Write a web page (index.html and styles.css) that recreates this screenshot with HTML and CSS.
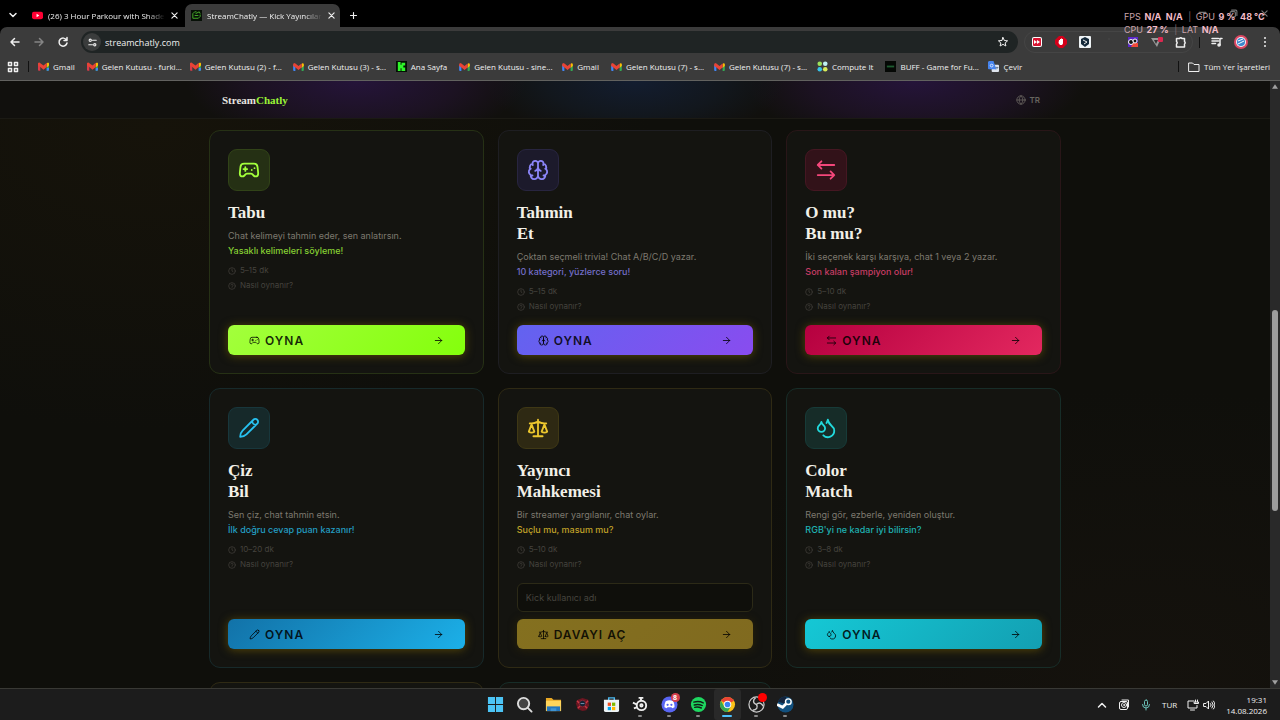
FILE: index.html
```
<!DOCTYPE html>
<html lang="tr">
<head>
  <meta charset="UTF-8">
  <meta name="viewport" content="width=device-width, initial-scale=1.0">
  <title>StreamChatly — Kick Yayıncıları</title>
  <link rel="stylesheet" href="styles.css">
</head>
<body>
  <svg class="sprite" aria-hidden="true">
    <symbol id="gamepad" viewBox="0 0 24 24"><path d="M6 11h4M8 9v4M15 12h.01M18 10h.01M17.32 5H6.68a4 4 0 0 0-3.978 3.59c-.006.052-.01.101-.017.152C2.604 9.416 2 14.456 2 16a3 3 0 0 0 3 3c1 0 1.5-.5 2-1l1.414-1.414A2 2 0 0 1 9.828 16h4.344a2 2 0 0 1 1.414.586L17 18c.5.5 1 1 2 1a3 3 0 0 0 3-3c0-1.545-.604-6.584-.685-7.258-.007-.05-.011-.1-.017-.151A4 4 0 0 0 17.32 5z"/></symbol>
    <symbol id="brain" viewBox="0 0 24 24"><path d="M12 5a3 3 0 1 0-5.997.125 4 4 0 0 0-2.526 5.77 4 4 0 0 0 .556 6.588A4 4 0 1 0 12 18ZM12 5a3 3 0 1 1 5.997.125 4 4 0 0 1 2.526 5.77 4 4 0 0 1-.556 6.588A4 4 0 1 1 12 18ZM15 13a4.5 4.5 0 0 1-3-4 4.5 4.5 0 0 1-3 4M17.599 6.5a3 3 0 0 0 .399-1.375M6.003 5.125A3 3 0 0 0 6.401 6.5M3.477 10.896a4 4 0 0 1 .585-.396M19.938 10.5a4 4 0 0 1 .585.396M6 18a4 4 0 0 1-1.967-.516M19.967 17.484A4 4 0 0 1 18 18"/></symbol>
    <symbol id="swap" viewBox="0 0 24 24"><path d="M7 2.500 3 6.500l4 4M3 6.500h18M17 21.500l4-4-4-4M21 17.500H3"/></symbol>
    <symbol id="pencil" viewBox="0 0 24 24"><path d="M21 3a2.900 2.900 0 0 0-4.200 0L5 14.800C3.200 16.600 2.400 19 2.400 21.600 5 21.600 7.400 20.800 9.200 19L21 7.200A2.900 2.900 0 0 0 21 3zM15.500 4.300c0 2.400 1.800 4.200 4.200 4.200"/></symbol>
    <symbol id="scale" viewBox="0 0 24 24"><path d="m16 16 3-8 3 8c-.87.65-1.92 1-3 1s-2.130-.35-3-1ZM2 16l3-8 3 8c-.87.65-1.920 1-3 1s-2.130-.35-3-1ZM7 21h10M12 3v18M3 7h2c2 0 5-1 7-2 2 1 5 2 7 2h2"/></symbol>
    <symbol id="droplets" viewBox="0 0 24 24"><path d="M7 16.300c2.200 0 4-1.830 4-4.050 0-1.160-.57-2.260-1.710-3.190S7.290 6.750 7 5.300c-.29 1.450-1.140 2.840-2.290 3.760S3 11.100 3 12.250c0 2.220 1.800 4.050 4 4.050zM12.560 6.600A10.970 10.970 0 0 0 14 3.020c.5 2.500 2 4.900 4 6.500s3 3.500 3 5.500a6.980 6.980 0 0 1-11.910 4.970"/></symbol>
    <symbol id="clock" viewBox="0 0 24 24"><circle cx="12" cy="12" r="10"/><path d="M12 6v6l3 2"/></symbol>
    <symbol id="help" viewBox="0 0 24 24"><circle cx="12" cy="12" r="10"/><path d="M9 9a3 3 0 0 1 6 1c0 2-3 2-3 4M12 17h.01"/></symbol>
    <symbol id="arrow" viewBox="0 0 24 24"><path d="M5 12h14M12 5l7 7-7 7"/></symbol>
    <symbol id="globe" viewBox="0 0 24 24"><circle cx="12" cy="12" r="10"/><path d="M2 12h20M12 2c-6 6-6 14 0 20M12 2c6 6 6 14 0 20"/></symbol>
    <symbol id="close" viewBox="0 0 24 24"><path d="M5 5l14 14M19 5 5 19"/></symbol>
    <symbol id="plus" viewBox="0 0 24 24"><path d="M12 4v16M4 12h16"/></symbol>
    <symbol id="down" viewBox="0 0 24 24"><path d="m6 9 6 6 6-6"/></symbol>
    <symbol id="up" viewBox="0 0 24 24"><path d="m5 16 7-7 7 7"/></symbol>
    <symbol id="gmail" viewBox="0 0 24 18">
      <path d="M0 2v14a2 2 0 0 0 2 2h3V7z" fill="#d93b4a"/>
      <path d="M24 2v14a2 2 0 0 1-2 2h-3V7z" fill="#34a853"/>
      <path d="M19 12v6h3a2 2 0 0 0 2-2v-4z" fill="#4285f4"/>
      <path d="M19 2l3-2 2 2v5l-5 4z" fill="#fbbc04"/>
      <path d="M0 2 2 0h1l9 7 7-6v9l-7 6-7-6L0 7z" fill="#ea4335"/>
    </symbol>
    <symbol id="gmail-blue" viewBox="0 0 24 18">
      <path d="M0 4v12a2 2 0 0 0 2 2h3V7z" fill="#4285f4"/>
      <path d="M24 4v12a2 2 0 0 1-2 2h-3V7z" fill="#34a853"/>
      <path d="M19 2l3-2 2 2v5l-5 4z" fill="#fbbc04"/>
      <path d="M0 2 2 0l3 1 7 6 7-6v9l-7 6-7-6L0 7z" fill="#ea4335"/>
    </symbol>
  </svg>

  <header class="browser">
    <div class="tabs">
      <button class="tool" aria-label="Sekme ara"><svg class="icon bold"><use href="#down"/></svg></button>
      <div class="tab">
        <svg class="favicon" viewBox="0 0 12 12"><rect y="2" width="12" height="8" rx="2" fill="#f03"/><path d="M5 4v4l3-2z" fill="#fff"/></svg>
        <span class="tab-title">(26) 3 Hour Parkour with Shade</span>
        <button class="tool" aria-label="Kapat"><svg class="icon small"><use href="#close"/></svg></button>
      </div>
      <div class="tab active">
        <svg class="favicon" viewBox="0 0 12 12"><rect width="12" height="12" fill="#071007"/><g fill="none" stroke="#49b52c"><path d="M6 2H4L2 4v5h6l2-2V5M5 4l4-2 1 2M4 6h4"/></g></svg>
        <span class="tab-title">StreamChatly — Kick Yayıncılar</span>
        <button class="tool" aria-label="Kapat"><svg class="icon small"><use href="#close"/></svg></button>
      </div>
      <button class="tool new-tab" aria-label="Yeni sekme"><svg class="icon small"><use href="#plus"/></svg></button>
      <div class="window-buttons">
        <svg class="icon small" viewBox="0 0 24 24"><path d="M3 9h18"/></svg>
        <svg class="icon small" viewBox="0 0 24 24"><rect x="3" y="7" width="14" height="14" rx="3"/><path d="M7 3h11a3 3 0 0 1 3 3v11"/></svg>
        <svg class="icon small"><use href="#close"/></svg>
      </div>
    </div>

    <div class="toolbar">
      <div class="nav">
        <button class="tool" aria-label="Geri"><svg class="icon bold" viewBox="0 0 24 24"><path d="M20 12H4M11 5l-7 7 7 7"/></svg></button>
        <button class="tool dim" aria-label="İleri"><svg class="icon bold" viewBox="0 0 24 24"><path d="M4 12h16M13 5l7 7-7 7"/></svg></button>
        <button class="tool" aria-label="Yenile"><svg class="icon bold" viewBox="0 0 24 24"><path d="M19 8a8 8 0 1 0 1 6M20 3v6h-6"/></svg></button>
      </div>
      <div class="address">
        <span class="site-info"><svg class="icon small" viewBox="0 0 24 24"><circle cx="6" cy="6" r="3"/><path d="M12 6h10M2 18h10"/><circle cx="18" cy="18" r="3"/></svg></span>
        <input type="text" class="url" value="streamchatly.com" aria-label="Adres">
        <svg class="icon star" viewBox="0 0 24 24"><path d="m12 3 2.700 6 6.500.6-4.900 4.300L17.800 20 12 16.700 6.200 20l1.500-6.100-4.900-4.300 6.500-.6z"/></svg>
      </div>
      <div class="extensions">
        <svg class="ext" viewBox="0 0 12 12"><rect x="1" y="1" width="10" height="10" rx="2" fill="#fff"/><rect x="2" y="2" width="8" height="8" rx="1" fill="#d71330"/><path d="M3 4v4l3-2zM6 4v4l3-2z" fill="#fff"/></svg>
        <svg class="ext" viewBox="0 0 12 12"><path d="M4 0h4l4 4v4l-4 4H4L0 8V4z" fill="#d4001a"/><path d="M4 4h1V3h1v-.5h1V3h1v4.500L7 9H5L3.500 7z" fill="#fff"/></svg>
        <svg class="ext" viewBox="0 0 12 12"><rect width="12" height="12" rx="1" fill="#eef3f6"/><path d="m6 1 4 2v5l-4 3-4-3V3z" fill="#14293a"/><path d="M4 4l4 2-3 2" fill="none" stroke="#eee"/></svg>
        <svg class="ext" viewBox="0 0 12 12"><circle cx="6" cy="3" r="1" fill="#444"/></svg>
        <svg class="ext" viewBox="0 0 12 12"><path d="M1 1h10v5L7 11H1z" fill="#5a28c8"/><path d="M6 7h5v4H4z" fill="#f04838"/><circle cx="4" cy="6" r="2.500" fill="#111" stroke="#fff"/><circle cx="8" cy="5" r="2" fill="#111" stroke="#fff"/></svg>
        <svg class="ext" viewBox="0 0 12 12"><path d="M0 2h10L6 11z" fill="#999"/><path d="M3 4h4L5 8z" fill="#333"/><rect x="7" y="1" width="5" height="5" rx="1" fill="#dc2850"/></svg>
        <svg class="icon bold" viewBox="0 0 24 24"><path d="M3 5h6a3 3 0 0 1 5 0h5v6a3 3 0 0 1 0 5v6H3v-6a3 3 0 0 0 0-5z"/></svg>
      </div>
      <span class="divider"></span>
      <svg class="icon bold" viewBox="0 0 24 24"><path d="M2 5h13M2 10h13M2 15h7M18 18V5h4"/><circle cx="16" cy="18" r="2"/></svg>
      <svg class="avatar" viewBox="0 0 14 14"><circle cx="7" cy="7" r="7" fill="#dc4864"/><circle cx="7" cy="7" r="5" fill="#f4f4f8"/><circle cx="7" cy="7" r="4" fill="#3c86cc"/><path d="M4 6l5-2M4 9l6-3" stroke="#fff"/></svg>
      <svg class="icon more" viewBox="0 0 24 24"><path d="M12 4v.1M12 12v.1M12 20v.1"/></svg>
    </div>

    <nav class="bookmarks">
      <svg class="icon apps" viewBox="0 0 24 24"><path d="M3 3h6v6H3zM15 3h6v6h-6zM3 15h6v6H3zM15 15h6v6h-6z"/></svg>
      <span class="divider"></span>
      <a class="bookmark" href="#"><svg class="fav"><use href="#gmail"/></svg>Gmail</a>
      <a class="bookmark long" href="#"><svg class="fav"><use href="#gmail"/></svg>Gelen Kutusu - furki...</a>
      <a class="bookmark long" href="#"><svg class="fav"><use href="#gmail"/></svg>Gelen Kutusu (2) - f...</a>
      <a class="bookmark long" href="#"><svg class="fav mini"><use href="#gmail-blue"/></svg>Gelen Kutusu (3) - s...</a>
      <a class="bookmark" href="#"><svg class="fav" viewBox="0 0 12 12"><rect width="12" height="12" fill="#041004"/><path d="M2 1h3v3h1V2h4v3H8v2h2v4H6V8H5v3H2z" fill="#2ff52a"/></svg>Ana Sayfa</a>
      <a class="bookmark long" href="#"><svg class="fav mini"><use href="#gmail-blue"/></svg>Gelen Kutusu - sine...</a>
      <a class="bookmark" href="#"><svg class="fav mini"><use href="#gmail-blue"/></svg>Gmail</a>
      <a class="bookmark long" href="#"><svg class="fav mini"><use href="#gmail-blue"/></svg>Gelen Kutusu (7) - s...</a>
      <a class="bookmark long" href="#"><svg class="fav mini"><use href="#gmail-blue"/></svg>Gelen Kutusu (7) - s...</a>
      <a class="bookmark" href="#"><svg class="fav" viewBox="0 0 12 12"><circle cx="3" cy="3" r="2.500" fill="#9be15a"/><circle cx="9" cy="3" r="2.500" fill="#bff0f4"/><circle cx="3" cy="9" r="2.500" fill="#35c3e8"/><circle cx="9" cy="9" r="2.500" fill="#d8ec5a"/></svg>Compute It</a>
      <a class="bookmark long" href="#"><svg class="fav" viewBox="0 0 12 12"><rect width="12" height="12" fill="#050805"/><path d="M2 6h8" stroke="#1d5c30" stroke-width="2"/></svg>BUFF - Game for Fu...</a>
      <a class="bookmark" href="#"><svg class="fav" viewBox="0 0 12 12"><rect x="4" y="4" width="8" height="8" rx="1" fill="#dfe5ee"/><path d="M1 0h5l3 9H1a1 1 0 0 1-1-1V1z" fill="#4684ee"/><circle cx="4" cy="5" r="1.500" fill="none" stroke="#dce8ff"/><path d="M8 7h3M9 9l2-2" stroke="#5a6e8c"/></svg>Çevir</a>
      <span class="spacer"></span>
      <span class="divider"></span>
      <a class="bookmark all" href="#"><svg class="icon" viewBox="0 0 24 24"><path d="M2 4h7l3 3h10v14H2z"/></svg>Tüm Yer İşaretleri</a>
    </nav>
  </header>

  <div class="viewport">
    <div class="page">
      <header class="site-header">
        <div class="container header-inner">
          <a class="logo" href="#">Stream<span>Chatly</span></a>
          <button class="lang"><svg class="icon"><use href="#globe"/></svg>TR</button>
        </div>
      </header>

      <main class="container games">
        <article class="card green">
          <div class="card-icon"><svg class="icon"><use href="#gamepad"/></svg></div>
          <h2>Tabu</h2>
          <p class="desc">Chat kelimeyi tahmin eder, sen anlatırsın.<br><strong>Yasaklı kelimeleri söyleme!</strong></p>
          <div class="meta">
            <span><svg class="icon"><use href="#clock"/></svg>5–15 dk</span>
            <button><svg class="icon"><use href="#help"/></svg>Nasıl oynanır?</button>
          </div>
          <button class="play"><svg class="icon"><use href="#gamepad"/></svg>OYNA<svg class="icon go"><use href="#arrow"/></svg></button>
        </article>

        <article class="card indigo">
          <div class="card-icon"><svg class="icon"><use href="#brain"/></svg></div>
          <h2>Tahmin<br>Et</h2>
          <p class="desc">Çoktan seçmeli trivia! Chat A/B/C/D yazar.<br><strong>10 kategori, yüzlerce soru!</strong></p>
          <div class="meta">
            <span><svg class="icon"><use href="#clock"/></svg>5–15 dk</span>
            <button><svg class="icon"><use href="#help"/></svg>Nasıl oynanır?</button>
          </div>
          <button class="play"><svg class="icon"><use href="#brain"/></svg>OYNA<svg class="icon go"><use href="#arrow"/></svg></button>
        </article>

        <article class="card rose">
          <div class="card-icon"><svg class="icon"><use href="#swap"/></svg></div>
          <h2>O mu?<br>Bu mu?</h2>
          <p class="desc">İki seçenek karşı karşıya, chat 1 veya 2 yazar.<br><strong>Son kalan şampiyon olur!</strong></p>
          <div class="meta">
            <span><svg class="icon"><use href="#clock"/></svg>5–10 dk</span>
            <button><svg class="icon"><use href="#help"/></svg>Nasıl oynanır?</button>
          </div>
          <button class="play"><svg class="icon"><use href="#swap"/></svg>OYNA<svg class="icon go"><use href="#arrow"/></svg></button>
        </article>

        <article class="card sky">
          <div class="card-icon"><svg class="icon"><use href="#pencil"/></svg></div>
          <h2>Çiz<br>Bil</h2>
          <p class="desc">Sen çiz, chat tahmin etsin.<br><strong>İlk doğru cevap puan kazanır!</strong></p>
          <div class="meta">
            <span><svg class="icon"><use href="#clock"/></svg>10–20 dk</span>
            <button><svg class="icon"><use href="#help"/></svg>Nasıl oynanır?</button>
          </div>
          <button class="play"><svg class="icon"><use href="#pencil"/></svg>OYNA<svg class="icon go"><use href="#arrow"/></svg></button>
        </article>

        <article class="card gold">
          <div class="card-icon"><svg class="icon"><use href="#scale"/></svg></div>
          <h2>Yayıncı<br>Mahkemesi</h2>
          <p class="desc">Bir streamer yargılanır, chat oylar.<br><strong>Suçlu mu, masum mu?</strong></p>
          <div class="meta">
            <span><svg class="icon"><use href="#clock"/></svg>5–10 dk</span>
            <button><svg class="icon"><use href="#help"/></svg>Nasıl oynanır?</button>
          </div>
          <input type="text" class="username" placeholder="Kick kullanıcı adı" aria-label="Kick kullanıcı adı">
          <button class="play"><svg class="icon"><use href="#scale"/></svg>DAVAYI AÇ<svg class="icon go"><use href="#arrow"/></svg></button>
        </article>

        <article class="card teal">
          <div class="card-icon"><svg class="icon"><use href="#droplets"/></svg></div>
          <h2>Color<br>Match</h2>
          <p class="desc">Rengi gör, ezberle, yeniden oluştur.<br><strong>RGB'yi ne kadar iyi bilirsin?</strong></p>
          <div class="meta">
            <span><svg class="icon"><use href="#clock"/></svg>3–8 dk</span>
            <button><svg class="icon"><use href="#help"/></svg>Nasıl oynanır?</button>
          </div>
          <button class="play"><svg class="icon"><use href="#droplets"/></svg>OYNA<svg class="icon go"><use href="#arrow"/></svg></button>
        </article>

        <article class="card gold"></article>
        <article class="card teal"></article>
      </main>
    </div>

    <div class="scrollbar">
      <svg viewBox="0 0 8 6"><path d="M4 0l4 6H0z"/></svg>
      <div class="track"><div class="thumb"></div></div>
      <svg viewBox="0 0 8 6"><path d="M0 0h8L4 6z"/></svg>
    </div>
  </div>

  <footer class="taskbar">
    <div class="apps-row">
      <span class="app"><svg viewBox="0 0 18 18"><path d="M1 1h7.500v7.500H1zM9.500 1H17v7.500H9.500zM1 9.500h7.500V17H1zM9.500 9.500H17V17H9.500z" fill="#4cc4f5"/></svg></span>
      <span class="app"><svg viewBox="0 0 18 18" fill="none" stroke="#ddd" stroke-width="2"><circle cx="8" cy="8" r="6" fill="#444"/><path d="m12.500 12.500 4 4" stroke-linecap="round"/></svg></span>
      <span class="app"><svg viewBox="0 0 18 18"><path d="M1 2h6l2 2h8v12H1z" fill="#e9a825"/><path d="M1 5h16v11H1z" fill="#ffd45a"/><path d="M2 11h14v5H2z" fill="#2476bd"/><path d="M6 13h6v3H6z" fill="#3f93d2"/></svg></span>
      <span class="app"><svg viewBox="0 0 18 18"><path d="m9 2 6 2 1 6-3 5-4 1-5-2-2-6 2-4z" fill="#6b1621"/><path d="m3 5 3 3M15 5l-3 3M4 13l3-3M14 13l-3-3" stroke="#c93644" stroke-width="1.500"/><circle cx="9" cy="8" r="3.500" fill="#142235" stroke="#8b2632"/><path d="M7 8h4" stroke="#7796b0"/></svg></span>
      <span class="app"><svg viewBox="0 0 18 18"><path d="M6 5V2h6v3" fill="none" stroke="#49b8f0" stroke-width="1.500"/><path d="M1 4h16v11a2 2 0 0 1-2 2H3a2 2 0 0 1-2-2z" fill="#eef4f7"/><path d="M5 7h3.500v3.500H5z" fill="#f25022"/><path d="M9.500 7H13v3.500H9.500z" fill="#7fba00"/><path d="M5 11.500h3.500V15H5z" fill="#00a4ef"/><path d="M9.500 11.500H13V15H9.500z" fill="#ffb900"/></svg></span>
      <span class="app open"><svg viewBox="0 0 18 18" fill="none" stroke="#eee" stroke-width="2"><circle cx="10" cy="10" r="5"/><circle cx="10" cy="10" r="1.200"/><path d="M5 9 1 7M7 2h5M9.500 2v3M5 12l-3 1"/></svg></span>
      <span class="app open"><svg viewBox="0 0 18 18"><circle cx="9" cy="9" r="8.500" fill="#5865f2"/><path d="M5 5.500c3-1.300 5-1.300 8 0 1 2 1.500 4 1.300 6.500L12 13l-1-1H7l-1 1-2.300-1C3.500 9.500 4 7.500 5 5.500z" fill="#fff"/><circle cx="7" cy="9.300" r="1.200" fill="#5865f2"/><circle cx="11" cy="9.300" r="1.200" fill="#5865f2"/></svg><b class="badge">8</b></span>
      <span class="app open"><svg viewBox="0 0 18 18"><circle cx="9" cy="9" r="8" fill="#1ed760"/><path d="M4 6.500c4-1.200 7-.8 10 .8M4.500 9.500c3-1 6-.6 8.500.6M5 12c2.500-.7 4.500-.4 7 .7" fill="none" stroke="#102016" stroke-width="1.500" stroke-linecap="round"/></svg></span>
      <span class="app open current"><svg viewBox="0 0 18 18"><circle cx="9" cy="9" r="8" fill="#fbc117"/><path d="M9 9 2.100 5A8 8 0 0 1 15.900 5z" fill="#ea4335"/><path d="M2.100 5A8 8 0 0 0 9 17l3.500-6H5.500z" fill="#34a853"/><circle cx="9" cy="9" r="4" fill="#fff"/><circle cx="9" cy="9" r="3" fill="#3b82f0"/></svg></span>
      <span class="app open"><svg viewBox="0 0 18 18" fill="none" stroke="#ccc"><circle cx="9" cy="9" r="8" fill="#1c1c1c" stroke-width="1.300"/><path d="M9 9C5 8 5 4 8 2M9 9c2 3 0 6-4 6M9 9c3-3 6-1 7 2" stroke-width="1.500"/></svg><b class="badge dot"></b></span>
      <span class="app open"><svg viewBox="0 0 18 18"><circle cx="9" cy="9" r="8.500" fill="#12507e"/><path d="M1 6a8.500 8.500 0 0 1 9-5l-2 7z" fill="#13233c"/><path d="m0 9 6 3 5-5" stroke="#fff" stroke-width="3" fill="none"/><circle cx="12" cy="6" r="3" fill="#12507e" stroke="#fff" stroke-width="1.500"/></svg></span>
    </div>
    <div class="tray">
      <svg class="icon bold" viewBox="0 0 24 24"><use href="#up"/></svg>
      <svg class="icon" viewBox="0 0 24 24"><rect x="3" y="5" width="16" height="16" rx="3"/><circle cx="12" cy="12" r="5"/><circle cx="12" cy="12" r="1"/><path d="M8 2h13v14"/></svg>
      <svg class="icon mic" viewBox="0 0 24 24"><rect x="9" y="2" width="6" height="12" rx="3"/><path d="M5 11a7 7 0 0 0 14 0M12 18v4"/></svg>
      <span class="keyboard">TUR</span>
      <svg class="icon" viewBox="0 0 24 24"><path d="M14 4H2v14h18v-5M7 22h8M17 2v4M21 2v4M15 6h8v3h-8z"/></svg>
      <svg class="icon" viewBox="0 0 24 24"><path d="M2 9h4l5-5v16l-5-5H2zM15 9a4 4 0 0 1 0 6M18 6a9 9 0 0 1 0 12M21 4a12 12 0 0 1 0 16"/></svg>
      <time class="clock">19:31<br>14.08.2026</time>
    </div>
  </footer>

  <!-- performance overlay -->
  <div class="overlay">
    <div>FPS <b>N/A</b> <b>N/A</b> <i>|</i> GPU <b>9 %</b> <b>48 °C</b></div>
    <div>CPU <b>27 %</b> <i>|</i> LAT <b>N/A</b></div>
  </div>
</body>
</html>
```
FILE: styles.css
```
* {
  box-sizing: border-box;
  margin: 0;
  padding: 0;
}

body {
  display: flex;
  flex-direction: column;
  height: 100vh;
  overflow: hidden;
  background: #000;
  color: #f0f0f0;
  font-family: "Open Sans", "Noto Sans", sans-serif;
  font-size: 8px;
}

button, input {
  font: inherit;
  color: inherit;
  background: none;
  border: none;
}

button {
  cursor: pointer;
}

a {
  color: inherit;
  text-decoration: none;
}

.sprite {
  display: none;
}

.icon {
  width: 12px;
  height: 12px;
  flex: none;
  fill: none;
  stroke: currentColor;
  stroke-width: 2;
  stroke-linecap: round;
  stroke-linejoin: round;
}

.icon.bold {
  stroke-width: 3;
}

.icon.small {
  width: 9px;
  height: 9px;
  stroke-width: 3;
}

/* browser */
.browser {
  flex: none;
  border-bottom: 1px solid #62625f;
}

.tabs {
  display: flex;
  align-items: flex-end;
  height: 27px;
  padding-left: 7px;
}

.tool {
  display: flex;
  align-items: center;
  justify-content: center;
  height: 24px;
}

.tool.dim {
  color: #858585;
}

.tab {
  display: flex;
  align-items: center;
  gap: 5px;
  width: 155px;
  height: 23px;
  padding: 0 6px;
}

.tabs > .tool + .tab {
  margin-left: 7px;
}

.tab.active {
  margin-left: 4px;
  background: #3b3b3b;
  border-radius: 7px 7px 0 0;
}

.favicon {
  width: 11px;
  height: 11px;
  flex: none;
}

.tab-title {
  flex: 1;
  white-space: nowrap;
  -webkit-mask-image: linear-gradient(90deg, #000 85%, transparent);
  mask-image: linear-gradient(90deg, #000 85%, transparent);
}

.new-tab {
  margin-left: 9px;
}

.window-buttons {
  display: flex;
  gap: 22px;
  margin-left: auto;
  padding: 0 11px 9px 0;
  color: #777;
}

.toolbar {
  display: flex;
  align-items: center;
  height: 30px;
  padding: 0 9px;
  background: #3b3b3b;
  border-radius: 7px 7px 0 0;
}

.toolbar > .icon, .avatar {
  margin-left: 11px;
}

.nav {
  display: flex;
  gap: 12px;
  width: 72px;
}

.address {
  display: flex;
  align-items: center;
  flex: 1;
  height: 22px;
  padding: 0 9px 0 2px;
  background: #1f2424;
  border-radius: 11px;
}

.site-info {
  display: flex;
  align-items: center;
  justify-content: center;
  width: 18px;
  height: 18px;
  border-radius: 50%;
  background: #3a3c3c;
}

.url {
  flex: 1;
  margin-left: 4px;
  font-size: 9px;
  outline: none;
}

.extensions {
  display: flex;
  align-items: center;
  gap: 12px;
  height: 22px;
  margin-left: 6px;
  padding: 0 5px 0 6px;
  border: 1px solid #454545;
  border-radius: 11px;
}

.ext {
  width: 12px;
  height: 12px;
}

.divider {
  width: 1px;
  height: 11px;
  margin-left: 6px;
  background: #111;
}

.avatar {
  width: 14px;
  height: 14px;
}

.more {
  stroke-width: 4;
}

.bookmarks {
  display: flex;
  align-items: center;
  height: 23px;
  padding: 0 10px 4px 7px;
  background: #3b3b3b;
  gap: 12px;
}

.bookmarks .divider {
  margin: 0 -3px;
}

.apps {
  stroke-width: 3;
}

.bookmark {
  display: flex;
  align-items: center;
  gap: 4px;
  white-space: nowrap;
}

.bookmark.long {
  width: 91px;
}

.fav {
  width: 11px;
  height: 11px;
  flex: none;
}

.fav.mini {
  height: 8px;
}

.spacer {
  flex: 1;
}

/* site */
.viewport {
  display: flex;
  flex: 1;
  min-height: 0;
}

.page {
  flex: 1;
  overflow: hidden;
  background:
    radial-gradient(ellipse 500px 300px at 12% 8%, #16130a, transparent),
    radial-gradient(ellipse 500px 300px at 90% 100%, #15120d, transparent),
    #0f0f0b;
  font-family: Inter, "Open Sans", sans-serif;
  font-size: 9px;
}

.container {
  max-width: 852px;
  margin: 0 auto;
}

.site-header {
  border-bottom: 1px solid #1b1a14;
  background:
    radial-gradient(ellipse 170px 64px at calc(50% - 279px) 0, #25143a, #1c1222 60%, transparent),
    radial-gradient(ellipse 150px 60px at 50% 0, #131d30, #12171d 60%, transparent),
    radial-gradient(ellipse 170px 64px at calc(50% + 279px) 0, #25143a, #1c1222 60%, transparent),
    #11100d;
}

.header-inner {
  display: flex;
  align-items: center;
  justify-content: space-between;
  height: 37px;
  padding: 0 21px 0 13px;
}

.logo {
  color: #e8e6e0;
  font-family: "Liberation Serif", serif;
  font-size: 11px;
  font-weight: 900;
}

.logo span {
  color: #9bf536;
}

.lang {
  display: flex;
  align-items: center;
  gap: 4px;
  color: #67645f;
  font-size: 8px;
  font-weight: 600;
}

.lang .icon {
  width: 10px;
  height: 10px;
}

.games {
  display: grid;
  grid-template-columns: repeat(3, 1fr);
  gap: 14px;
  padding-top: 11px;
}

.card {
  --accent: #a3ff3c;
  --from: #a3ff3c;
  --to: #84ff0c;
  display: flex;
  flex-direction: column;
  min-height: 244px;
  padding: 18px;
  background: #141410;
  border: 1px solid color-mix(in srgb, var(--accent) 12%, #151510);
  border-radius: 11px;
}

.indigo {
  --accent: #8b85f8;
  --from: #6263f0;
  --to: #894cef;
  border-color: #1e1e22;
}

.rose {
  --accent: #f4477b;
  --from: #b5003f;
  --to: #e3285f;
  border-color: #291618;
}

.sky {
  --accent: #27c1f0;
  --from: #1272a8;
  --to: #1cb0e8;
}

.gold {
  --accent: #ecc72e;
  --from: #84701f;
  --to: #806a1f;
}

.teal {
  --accent: #22d9dc;
  --from: #15c8d5;
  --to: #139fb2;
}

.card-icon {
  display: flex;
  align-items: center;
  justify-content: center;
  width: 42px;
  height: 42px;
  margin-bottom: 11px;
  color: var(--accent);
  background: color-mix(in srgb, var(--accent) 12%, #14140f);
  border: 1px solid color-mix(in srgb, var(--accent) 20%, #14140f);
  border-radius: 9px;
}

.indigo .card-icon {
  background: #1c1a2b;
  border-color: #282540;
}

.rose .card-icon {
  background: #321219;
  border-color: #451722;
}

.card-icon .icon {
  width: 22px;
  height: 22px;
}

.card h2 {
  margin-bottom: 5px;
  color: #f2f0e8;
  font-family: "Liberation Serif", serif;
  font-size: 17px;
  font-weight: 900;
  line-height: 21px;
}

.desc {
  margin-bottom: 5px;
  color: #7d796f;
  line-height: 15px;
}

.desc strong {
  color: color-mix(in srgb, var(--accent) 80%, #14140f);
  font-weight: 500;
}

.meta {
  display: flex;
  flex-direction: column;
  align-items: flex-start;
  margin-bottom: 11px;
  color: #45433e;
  font-size: 8px;
  line-height: 15px;
}

.meta span, .meta button {
  display: flex;
  align-items: center;
  gap: 4px;
}

.meta .icon {
  width: 8px;
  height: 8px;
}

.username {
  height: 29px;
  margin-bottom: 7px;
  padding: 0 8px;
  background: #0f0f0b;
  border: 1px solid #2c2a17;
  border-radius: 6px;
}

.username::placeholder {
  color: #46443e;
}

.play {
  display: flex;
  align-items: center;
  gap: 5px;
  height: 30px;
  margin-top: auto;
  padding: 0 21px;
  background: linear-gradient(135deg, var(--from), var(--to));
  border-radius: 6px;
  box-shadow: 0 1px 10px #554708;
  color: rgba(0, 0, 0, 0.85);
  font-size: 12px;
  font-weight: 600;
  letter-spacing: 1px;
}

.gold .play {
  box-shadow: 0 1px 8px #2b240a;
}

.play .icon {
  width: 11px;
  height: 11px;
}

.play .go {
  margin-left: auto;
}

.scrollbar {
  display: flex;
  flex-direction: column;
  align-items: center;
  width: 10px;
  padding: 3px 0;
  background: #292929;
}

.scrollbar svg {
  width: 6px;
  height: 5px;
  fill: #a0a0a0;
}

.track {
  flex: 1;
  width: 6px;
}

.thumb {
  height: 34%;
  margin-top: 221px;
  background: #9c9c9c;
  border-radius: 3px;
}

/* taskbar */
.taskbar {
  display: grid;
  grid-template-columns: 1fr auto 1fr;
  flex: none;
  height: 32px;
  background: #1c1c1c;
  border-top: 1px solid #393935;
}

.apps-row {
  display: flex;
  grid-column: 2;
  gap: 2px;
}

.app {
  position: relative;
  display: flex;
  align-items: center;
  justify-content: center;
  width: 27px;
}

.app svg {
  width: 17px;
  height: 17px;
}

.app.open::after {
  content: "";
  position: absolute;
  bottom: 3px;
  width: 4px;
  height: 2px;
  border-radius: 1px;
  background: #888;
}

.app.current {
  background: #292929;
  border-radius: 3px;
}

.app.current::after {
  width: 10px;
  background: #4cc2ff;
}

.badge {
  position: absolute;
  top: 4px;
  right: 3px;
  width: 9px;
  height: 9px;
  border-radius: 50%;
  background: #d6404c;
  color: #fff;
  font-size: 7px;
  line-height: 9px;
  text-align: center;
}

.badge.dot {
  background: #f00;
}

.tray {
  display: flex;
  align-items: center;
  justify-content: flex-end;
  gap: 10px;
  padding-right: 13px;
}

.keyboard + .icon {
  margin-right: -6px;
}

.mic {
  color: #6cc4bb;
}

.clock {
  margin-left: 1px;
  line-height: 11px;
  text-align: right;
}

/* sits on top of everything */
.overlay {
  position: absolute;
  top: 10px;
  right: 10px;
  width: 146px;
  color: #c9a3ab;
  font-family: Inter, sans-serif;
  font-size: 9px;
  line-height: 13px;
  white-space: nowrap;
}

.overlay b {
  margin: 0 1px;
  color: #f3bcc8;
}

.overlay i {
  margin: 0 2px;
  font-style: normal;
  color: #806b70;
}
```
